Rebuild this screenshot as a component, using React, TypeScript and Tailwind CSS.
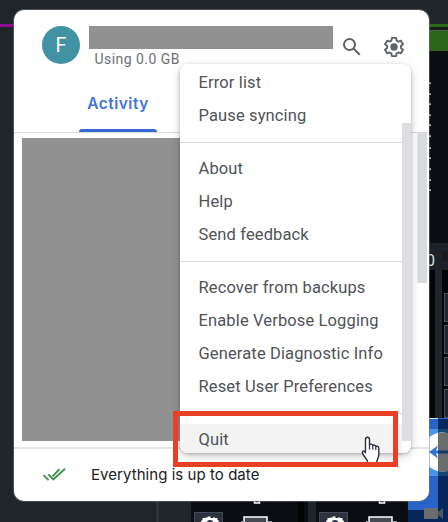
import React from "react";

const groups = [
  ["Error list", "Pause syncing"],
  ["About", "Help", "Send feedback"],
  ["Recover from backups", "Enable Verbose Logging", "Generate Diagnostic Info", "Reset User Preferences"],
];

function Backdrop() {
  const ticks = [83, 94, 104, 115, 125, 136, 148, 158, 169, 180, 190];
  return (
    <svg className="absolute inset-0" width="448" height="522" viewBox="0 0 448 522">
      <rect width="448" height="522" fill="#20252a" />
      <rect x="0" y="24" width="15" height="3" fill="#8b0f8f" />
      <rect x="424" y="51" width="24" height="192" fill="#0a0e13" />
      <rect x="424" y="24" width="24" height="3" fill="#2b6914" />
      <rect x="424" y="27" width="24" height="4" fill="#18201c" />
      <rect x="424" y="30" width="24" height="1" fill="#53605a" />
      <rect x="424" y="31" width="24" height="20" fill="#2b6518" />
      <rect x="424" y="243" width="24" height="27" fill="#1d2228" />
      <rect x="442" y="251" width="6" height="10" fill="#181a1c" />
      <rect x="424" y="270" width="24" height="149" fill="#030608" />
      <rect x="435" y="270" width="7" height="149" fill="#20252a" />
      {ticks.map((y) => <rect key={y} x="424" y={y - 0.5} width="7" height="1.3" fill="#e8eaed" />)}
      {[293, 325, 357, 389].map((y) => (
        <rect key={y} x="444.5" y={y + 0.5} width="8" height="28" fill="#20262f" stroke="#48505a" />
      ))}
      <rect x="156" y="500" width="3" height="22" fill="#2e343c" />
      <rect x="191" y="500" width="217" height="22" fill="#0a0d12" />
      <rect x="298" y="500" width="6" height="22" fill="#030507" />
      <rect x="308" y="500" width="8" height="22" fill="#20252a" />
      {[0, 125].map((x) => (
        <g key={x} transform={`translate(${x} 0)`}>
          <rect x="194.5" y="512.5" width="28" height="14" fill="#2c323d" stroke="#444b55" />
          <path d="M201 522v-1l1.500-1v-2h3v-.5h2V518h1.500v-0h2.500v0h1.500v-.5h2v.5h2.500v2l1.500 1v1h-6a3 2 0 0 0-6 0z" fill="#fff" />
          <rect x="207.500" y="516.500" width="3" height="3" fill="#fff" />
          <rect x="254.500" y="498" width="5" height="5" fill="#20252a" stroke="#fff" strokeWidth="1.500" />
          <rect x="244" y="517" width="23" height="10" fill="#454b53" stroke="#fff" strokeWidth="1.500" />
          <path d="M241 521.500h3m24 0h4" stroke="#9aa0a6" />
        </g>
      ))}
      <rect x="408" y="418" width="40" height="104" fill="#2863c7" />
      <rect x="424" y="429" width="24" height="47" fill="#4596e6" />
      <rect x="438" y="419" width="10" height="103" fill="#07275b" />
      <rect x="438" y="429" width="10" height="47" fill="#174673" />
      <circle cx="442" cy="452" r="19.500" fill="#fff" />
      <path d="M438 433h10v38.500h-10z" fill="#6b6c6e" />
      <path d="M429 452l9-6.500-2 5h2v3h-2l2 5z" fill="#2f75d6" />
      <path d="M438 450.500h10v3h-10z" fill="#143969" />
      <rect x="408" y="510" width="40" height="12" fill="#07275b" />
      <rect x="424" y="508" width="14" height="11" rx="1" fill="#6b6c6e" />
      <path d="M438 512l5-4v11l-5-4z" fill="#515960" />
      <path d="M408 418.500h30" stroke="#d9dce0" />
    </svg>
  );
}

function Gear() {
  return (
    <svg className="h-6 w-6" viewBox="0 0 24 24" fill="none">
      <path d="M9.900 2.900h4.200l.5 2.700c.8.300 1.200.6 1.800 1l2.500-.9 2.100 3.600-2.100 1.700v2l2.100 1.700-2.100 3.600-2.500-.9c-.6.500-1.100.8-1.800 1l-.5 2.700H9.900l-.5-2.700c-.7-.2-1.200-.5-1.800-1l-2.500.9L3 14.700 5.100 13v-2L3 9.300l2.100-3.600 2.500.9c.6-.4 1.100-.7 1.800-1z" stroke="#5f6368" strokeWidth="1.900" strokeLinejoin="round" />
      <circle cx="12" cy="12" r="3.700" fill="#5f6368" />
    </svg>
  );
}

function Menu() {
  return (
    <div className="absolute left-[166px] top-[54px] h-[389px] w-[231px] overflow-hidden rounded-lg bg-white pt-[2px] font-['Roboto',sans-serif] text-[16.500px] text-[#505357]">
      {groups.map((items) => (
        <div key={items[0]} className="mb-[9px] border-b border-[#dadce0] pb-[10px]">
          {items.map((item) => (
            <div key={item} className="flex h-[33px] items-center whitespace-nowrap pl-[18.500px] pt-[2px] tracking-[0.130px]">{item}</div>
          ))}
        </div>
      ))}
      <div className="mt-[10px] flex h-[32px] items-center bg-[#f3f3f3] pl-[18.500px] pt-px tracking-[0.130px]">Quit</div>
      <div className="absolute right-0 top-[59px] h-[318px] w-[9px] bg-[#dcdee1]" />
      <div className="absolute bottom-0 right-0 h-3 w-[9px] bg-white" />
    </div>
  );
}

export default function App() {
  return (
    <div className="relative h-[522px] w-[448px] overflow-hidden bg-[#20252a]">
      <Backdrop />
      <span className="absolute left-[426px] top-[251px] font-['Roboto',sans-serif] text-[16px] leading-5 text-[#d8dce0]">0</span>
      <main className="absolute left-[14px] top-[10px] flex h-[491px] w-[415px] flex-col rounded-[10px] bg-white shadow-[0_0_0_1px_#777b7e80]">
        <header className="flex h-[70px] shrink-0">
          <div className="ml-7 mt-4 flex h-[38px] w-[38px] items-center justify-center rounded-full bg-[#4193a3] font-['Roboto',sans-serif] text-[20px] text-white">F</div>
          <div className="ml-[9px] mt-4 w-[244px]">
            <div className="h-[23px] bg-[#919191]" />
            <div className="ml-[5.500px] font-['Roboto',sans-serif] text-[14px] leading-[20px] tracking-[0.450px] text-[#6c7075]">Using 0.0 GB</div>
          </div>
          <svg className="ml-[7px] mt-[25px] h-6 w-6" viewBox="0 0 24 24" fill="none" stroke="#5f6368" strokeWidth="2"><circle cx="9.500" cy="9.500" r="5.500" /><path d="m13.500 13.500 6.300 6.300" /></svg>
          <div className="ml-[18px] mt-[25px]"><Gear /></div>
        </header>
        <nav className="flex h-[53px] shrink-0 border-b border-[#dadce0] pl-[65px]">
          <div className="flex w-[78px] flex-col items-center justify-between pt-[12px]">
            <span className="font-['Inter',sans-serif] text-[15.500px] font-semibold leading-[24px] tracking-[0.500px] text-[#4072e0]">Activity</span>
            <div className="h-[3px] w-full rounded-t-[3px] bg-[#3569d8]" />
          </div>
        </nav>
        <section className="flex min-h-0 flex-1 justify-between">
          <div className="ml-2 mt-[5px] h-[303px] w-[158px] bg-[#919191]" />
          <div className="mr-[2px] h-[150px] w-[10px] border-l border-[#e5e5e7] bg-[#d9dade]" />
        </section>
        <footer className="flex h-[54px] shrink-0 items-center border-t-2 border-[#e4e5e7]">
          <svg className="ml-[28px] h-6 w-6" viewBox="0 0 24 24" fill="none" stroke="#41904d" strokeWidth="1.900"><path d="m1.500 12.200 5 5M6.200 11.300l5.100 5.100L23 5.700M10.500 13.400l7-7.200" /></svg>
          <span className="ml-[25px] font-['Inter',sans-serif] text-[15px] tracking-[0.050px] text-[#202124]">Everything is up to date</span>
        </footer>
        <div className="pointer-events-none absolute left-[166px] top-[54px] h-[389px] w-[231px] rounded-lg shadow-[0_3px_10px_#00000035,0_1px_3px_#00000035]" />
        <Menu />
      </main>
      <svg className="absolute left-[358px] top-[435px]" width="24" height="29" viewBox="0 0 24 29">
        <path d="M7.500 17.500V4.500c0-3 4-3 4 0v5.300c1-1.200 3-.8 3.300.7 1.100-.9 2.700-.4 3 1 1.400-.7 3 0 3 1.700v6.300c0 3.500-2 5-2.300 8.500H10c0-3.200-4-6-5.300-9.600-1-2.600 1-3.400 2.800-.9z" fill="white" stroke="#2b303c" strokeWidth="1.400" strokeLinejoin="round" />
        <path d="M11.500 9.500v5m3.300-4v4m3-3v3.500" stroke="#2b303c" strokeWidth="1.200" />
      </svg>
      <div className="absolute left-[173px] top-[411px] h-[56px] w-[225px] border-[5px] border-[#e94025]" />
    </div>
  );
}
